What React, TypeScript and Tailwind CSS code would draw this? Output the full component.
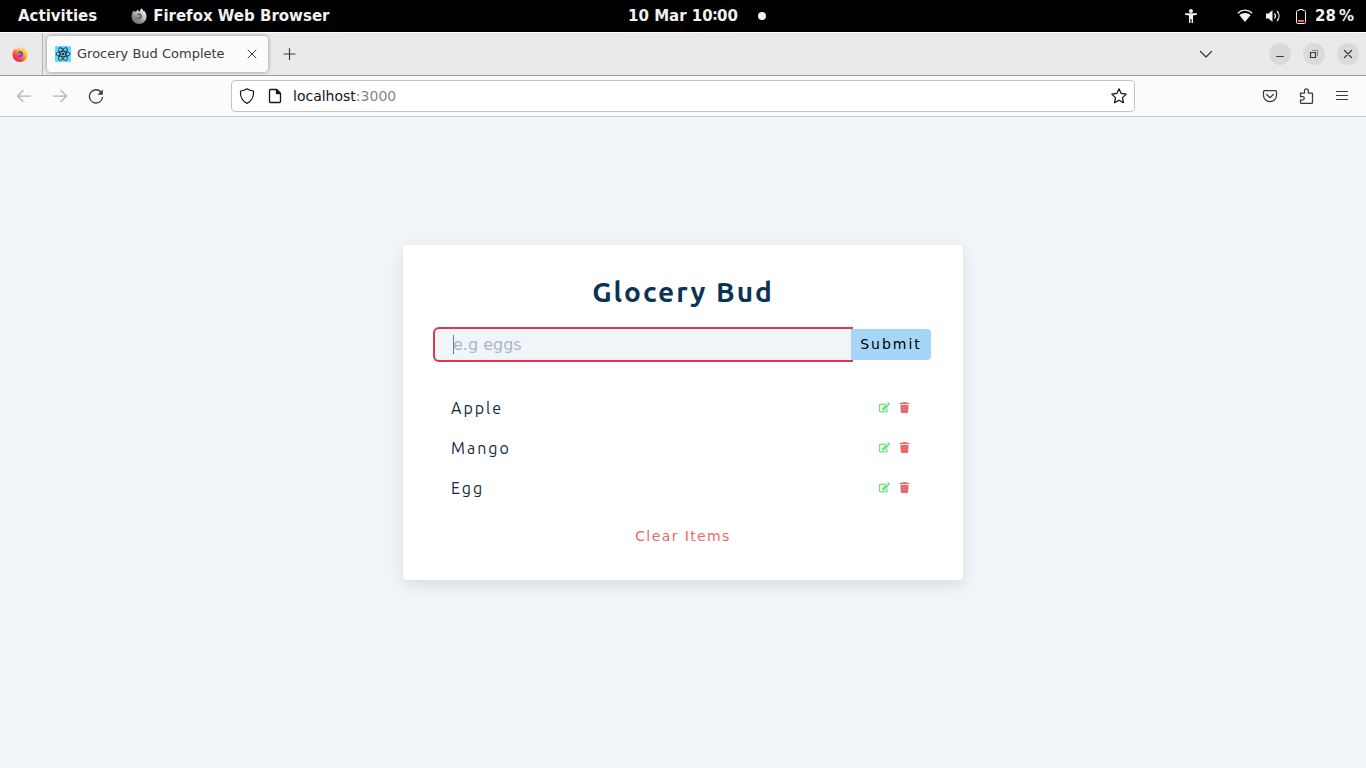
import { useId } from 'react'
import { FaEdit, FaTrash } from 'react-icons/fa'

function FirefoxLogo({ mono = false }: { mono?: boolean }) {
  const id = useId()
  return (
    <svg viewBox="0 0 32 32" className="size-4 shrink-0" aria-hidden="true">
      <defs>
        <linearGradient id={id} x1="0.85" y1="0.1" x2="0.2" y2="0.95">
          <stop offset="0" stopColor={mono ? '#f0f0f0' : '#fff44f'} />
          <stop offset="0.4" stopColor={mono ? '#c4c4c4' : '#ffa930'} />
          <stop offset="0.7" stopColor={mono ? '#8a8a8a' : '#ff4a3d'} />
          <stop offset="1" stopColor={mono ? '#6c6c6c' : '#e5146f'} />
        </linearGradient>
      </defs>
      <path
        fill={`url(#${id})`}
        d="M3 9c.4-1.600 1.300-3 2.300-4 .1 1 .5 2 1 2.700 1.200-.6 2.600-.7 4-.4C11.500 5 13 3.800 14.500 3.200c-.3 1.800.5 3.200 2 4.200C18 5.500 19.500 3.500 20 .5c2.500 1.300 4.500 3.600 5.300 6.300.5-.3.7-.8.8-1.300C29.500 8.800 31 13 31 17c0 8.300-6.500 15-15 15S1 25.500 1 17c0-3 .6-5.700 2-8z"
      />
      <path
        fill={mono ? '#707070' : '#7542e5'}
        d="M16 10c4 .2 6.500 3 6.500 6.500 0 4-3 6.500-6.800 6.500-3.500 0-6.200-2-6.700-4.500 2 1 4 .8 5.500-.4 1-.8 2-1 2.700-1.300.5-.3.3-1.400-.8-2-1.200-.7-2.500-.5-3.600.1-1.200-.7-1.300-2-.6-2.900.7-1 2-1.600 3.800-2z"
      />
    </svg>
  )
}

function ReactFavicon() {
  return (
    <svg viewBox="0 0 32 32" className="size-4 shrink-0" aria-hidden="true">
      <rect width="32" height="32" rx="2" fill="#61dafb" />
      <g fill="none" stroke="#20303a" strokeWidth="1.800">
        <ellipse cx="16" cy="16" rx="14" ry="5.400" />
        <ellipse cx="16" cy="16" rx="14" ry="5.400" transform="rotate(60 16 16)" />
        <ellipse cx="16" cy="16" rx="14" ry="5.400" transform="rotate(120 16 16)" />
      </g>
      <circle cx="16" cy="16" r="2.700" fill="#20303a" />
    </svg>
  )
}

function Icon({ d, className = 'size-4', weight = 1.25 }: { d: string; className?: string; weight?: number }) {
  return (
    <svg
      viewBox="0 0 16 16"
      className={`shrink-0 ${className}`}
      fill="none"
      stroke="currentColor"
      strokeWidth={weight}
      strokeLinecap="round"
      strokeLinejoin="round"
      aria-hidden="true"
    >
      <path d={d} />
    </svg>
  )
}

function SystemBar() {
  return (
    <header className="grid h-8 grid-cols-[1fr_auto_1fr] items-center bg-black px-3 text-[15px] font-bold text-[#f2f2f2]">
      <div className="flex items-center gap-[34px]">
        <button type="button" className="pl-1.5">Activities</button>
        <button type="button" className="flex items-center gap-1.5 whitespace-nowrap">
          <FirefoxLogo mono />
          Firefox Web Browser
        </button>
      </div>
      <div className="flex items-center gap-5 pl-7">
        <time className="whitespace-pre">10 Mar 10∶00</time>
        <span className="size-2 rounded-full bg-[#f2f2f2]" />
      </div>
      <div className="flex items-center justify-end">
        <svg viewBox="0 0 16 16" className="mr-[38px] size-4" fill="currentColor" aria-hidden="true">
          <circle cx="8" cy="3" r="2" />
          <path d="M2 5.200h12v1.600l-4 .7V15H8.600v-4H7.400v4H6V7.500l-4-.7z" />
        </svg>
        <svg viewBox="0 0 16 16" className="mr-3 size-4" fill="currentColor" aria-hidden="true">
          <path d="M.8 5.200C5 1.200 11 1.200 15.200 5.200" fill="none" stroke="currentColor" strokeWidth="1.300" />
          <path d="M2.300 7C5.500 4.300 10.500 4.300 13.700 7L8 14z" />
        </svg>
        <svg viewBox="0 0 16 16" className="mr-3 size-4" fill="currentColor" aria-hidden="true">
          <path d="M1 5.500h2.500L7.500 2v12l-4-3.500H1z" />
          <path d="M9.500 5.500c1.300 1.500 1.300 3.500 0 5M12 3c2.700 3 2.700 7 0 10" fill="none" stroke="currentColor" strokeWidth="1.200" />
        </svg>
        <svg viewBox="0 0 16 16" className="mr-1.5 size-4" fill="none" aria-hidden="true">
          <path d="M6 1.500h4v1h1.500q1 0 1 1v11q0 1-1 1h-7q-1 0-1-1v-11q0-1 1-1H6z" stroke="#f2f2f2" />
          <path d="M5 12h6v2H5z" fill="#f4692e" />
        </svg>
        <span>28{'\u2009'}%</span>
      </div>
    </header>
  )
}

function TabStrip() {
  return (
    <div className="flex h-11 items-center border-t border-b border-t-white border-b-[#9e9ea0] bg-[#eaeaea] text-[#3a3a3a]">
      <button type="button" aria-label="Firefox View" className="flex h-full w-[43px] items-center border-r border-[#b5b5b5] pl-3">
        <FirefoxLogo />
      </button>
      <div className="ml-1 flex h-9 w-[221px] items-center rounded bg-[#fbfbfb] px-2 shadow-[0_0_4px_rgba(0,0,0,0.4)]">
        <ReactFavicon />
        <span className="ml-1.5 flex-1 whitespace-nowrap text-[13px]">Grocery Bud Complete</span>
        <button type="button" aria-label="Close tab">
          <Icon d="M4 4l8 8M12 4l-8 8" weight={1} />
        </button>
      </div>
      <button type="button" aria-label="New tab" className="ml-3.5">
        <Icon d="M7.500 2.500v11M2 8h11" weight={1.2} />
      </button>
      <div className="ml-auto flex items-center gap-3 pr-[7px]">
        <button type="button" aria-label="List all tabs" className="mr-[43px]">
          <Icon d="M2.500 5.500L8 11l5.500-5.500" />
        </button>
        <button type="button" aria-label="Minimize" className="flex size-[22px] items-center justify-center rounded-full bg-[#dadada]">
          <Icon d="M4.500 10.500h7" weight={1} />
        </button>
        <button type="button" aria-label="Restore" className="flex size-[22px] items-center justify-center rounded-full bg-[#dadada]">
          <svg viewBox="0 0 16 16" className="size-4" fill="none" stroke="currentColor" aria-hidden="true">
            <path d="M4.500 6.500h5v5h-5z" strokeWidth="1.200" />
            <path d="M6 4.500h5.500V10" strokeOpacity="0.500" />
          </svg>
        </button>
        <button type="button" aria-label="Close" className="flex size-[22px] items-center justify-center rounded-full bg-[#dadada]">
          <Icon d="M4.500 4.500l7 7M11.500 4.500l-7 7" weight={1.2} />
        </button>
      </div>
    </div>
  )
}

function Toolbar() {
  return (
    <div className="flex h-[41px] items-center justify-between border-b border-[#c8c8ca] bg-[#fbfbfb] px-4 text-[#3a3a3a]">
      <div className="flex flex-1 gap-5">
        <button type="button" aria-label="Back" disabled className="text-[#b4b4b4]">
          <Icon d="M14.500 8h-13M7 2.500L1.500 8 7 13.500" />
        </button>
        <button type="button" aria-label="Forward" disabled className="text-[#b4b4b4]">
          <Icon d="M1.500 8h13M9 2.500L14.500 8 9 13.500" />
        </button>
        <button type="button" aria-label="Reload">
          <svg viewBox="0 0 16 16" className="size-4" fill="none" stroke="currentColor" strokeWidth="1.300" aria-hidden="true">
            <path d="M13 4A6.600 6.600 0 1 0 14.600 9" />
            <path d="M14.800 1.500v5.300H9.500z" fill="currentColor" stroke="none" />
          </svg>
        </button>
      </div>
      <div className="flex h-8 w-[904px] shrink items-center rounded border border-[#c4c4c6] bg-white px-[7px] text-[#15141a]">
        <Icon d="M8 .8c2 1.500 4 2 6.500 2.200C15 8.500 12.500 13.500 8 15.300 3.500 13.500 1 8.500 1.500 3 4 2.800 6 2.300 8 .8z" />
        <svg viewBox="0 0 16 16" className="ml-3 size-4" fill="none" stroke="currentColor" strokeWidth="1.300" strokeLinejoin="round" aria-hidden="true">
          <path d="M3.500 1.500h6l4 4v8q0 1-1 1h-9q-1 0-1-1v-11q0-1 1-1z" />
          <path d="M9.500 1.500v4h4z" fill="currentColor" />
        </svg>
        <span className="ml-2.5 flex-1 text-[14px]">
          localhost<span className="text-[#858589]">:3000</span>
        </span>
        <button type="button" aria-label="Bookmark this page">
          <Icon d="M8 .8l2.200 4.600 5 .7-3.700 3.500.9 5.100L8 12.200l-4.400 2.500.9-5.100L.8 6.100l5-.7z" />
        </button>
      </div>
      <div className="flex flex-1 items-center justify-end gap-5">
        <button type="button" aria-label="Save to Pocket">
          <Icon d="M2.500 2.500h11q1 0 1 1v4a6.500 6 0 0 1-13 0v-4q0-1 1-1zM4.700 6.500L8 9.700l3.300-3.200" />
        </button>
        <button type="button" aria-label="Extensions">
          <Icon d="M2.500 5h4V2.800a1.900 1.900 0 0 1 3.800 0V5h3.500q.7 0 .7.700v8.900q0 .8-.8.800H3.300q-.8 0-.8-.8v-2.700h2.200a1.600 1.600 0 0 0 0-3.200H2.500z" />
        </button>
        <button type="button" aria-label="Open application menu">
          <Icon d="M2.500 3.500h11M2.500 7.500h11M2.500 11.500h11" weight={1.2} />
        </button>
      </div>
    </div>
  )
}

const items = ['Apple', 'Mango', 'Egg']

function GroceryCard() {
  return (
    <section className="mx-auto mt-32 w-[90vw] max-w-[560px] rounded bg-white px-8 pt-[31px] pb-8 shadow-[0_5px_15px_rgba(0,0,0,0.1)]">
      <form onSubmit={(event) => event.preventDefault()}>
        <h1 className="mb-[21px] text-center font-['Ubuntu','Noto_Sans',sans-serif] text-[28px] leading-8 font-bold tracking-[2px] text-[#0a3453]">
          Glocery Bud
        </h1>
        <div className="relative flex">
          <input
            type="text"
            aria-label="Grocery item"
            placeholder="e.g eggs"
            autoFocus
            className="h-[31px] min-w-0 flex-1 rounded-l bg-[#f1f5f8] pl-[18px] text-[16px] text-[#617d98] caret-transparent ring-2 ring-[#de354f] outline-none placeholder:text-[#a6b8ca]"
          />
          <span className="pointer-events-none absolute top-1.5 left-[18px] h-[19px] w-px bg-[#617d98]" />
          <button type="submit" className="z-10 h-[31px] w-20 rounded-r bg-[#a5d5f9] text-[14px] tracking-[2px] text-black">
            Submit
          </button>
        </div>
      </form>
      <ul className="mt-8 flex flex-col gap-2">
        {items.map((item) => (
          <li key={item} className="flex h-8 items-center justify-between px-4">
            <p className="font-['Ubuntu','Noto_Sans',sans-serif] text-[16px] tracking-[2px] text-[#102a42]">{item}</p>
            <div className="flex items-center gap-[9px] pr-[5px] pb-0.5">
              <button type="button" aria-label={`Edit ${item}`} className="text-[#66e674]">
                <FaEdit className="size-[11px]" />
              </button>
              <button type="button" aria-label={`Delete ${item}`} className="text-[#e66b6b]">
                <FaTrash className="size-[11px]" />
              </button>
            </div>
          </li>
        ))}
      </ul>
      <button type="button" className="mx-auto mt-5 block h-6 text-[14px] tracking-widest text-[#e66b6b]">
        Clear Items
      </button>
    </section>
  )
}

export default function App() {
  return (
    <div className="min-h-screen bg-[#f1f5f8] font-['DejaVu_Sans',sans-serif]">
      <SystemBar />
      <TabStrip />
      <Toolbar />
      <main>
        <GroceryCard />
      </main>
    </div>
  )
}
